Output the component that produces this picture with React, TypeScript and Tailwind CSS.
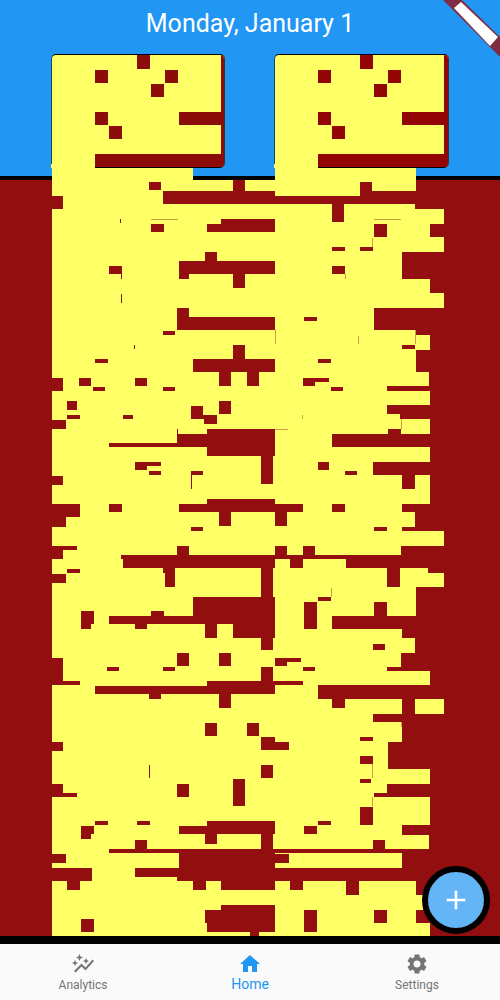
import { MdAdd, MdAutoGraph, MdHome, MdSettings } from "react-icons/md";

type Box = [number, number, number, number];

// yellow rows: top, bottom, right edge (all start at x=52)
const bands: [number, number, number][] = [
  [180, 191, 416], [191, 209, 415], [209, 252, 444], [252, 279, 402], [279, 293, 430],
  [293, 308, 444], [308, 330, 374], [330, 335, 415], [335, 350, 430], [350, 372, 416],
  [372, 386, 429], [386, 391, 387], [391, 405, 430], [405, 414, 387], [414, 419, 400],
  [419, 434, 430], [434, 447, 332], [447, 462, 430], [462, 475, 373], [475, 504, 430],
  [504, 512, 402], [512, 531, 415], [531, 546, 444], [546, 555, 401], [555, 559, 250],
  [559, 568, 346], [568, 573, 428], [573, 587, 444], [587, 616, 416], [616, 629, 332],
  [629, 638, 402], [638, 653, 415], [653, 667, 401], [667, 671, 387], [671, 685, 430],
  [685, 699, 318], [699, 714, 444], [714, 722, 373], [722, 727, 401], [727, 742, 402],
  [742, 769, 388], [769, 784, 430], [784, 793, 387], [793, 797, 374], [797, 825, 430],
  [825, 835, 402], [835, 849, 429], [849, 853, 332], [853, 868, 402], [868, 881, 177],
  [881, 895, 416], [895, 910, 423], [910, 923, 416], [923, 936, 430],
];

const holes: Box[] = [
  [149, 182, 161, 190], [233, 180, 245, 191], [360, 182, 372, 204], [163, 191, 275, 204],
  [275, 196, 360, 204], [372, 191, 415, 204], [52, 196, 63, 209], [332, 204, 344, 222],
  [207, 224, 275, 232], [221, 219, 275, 224], [151, 224, 164, 232], [374, 224, 387, 237],
  [430, 224, 444, 237], [332, 247, 345, 251], [360, 247, 373, 251], [205, 252, 217, 261],
  [179, 261, 275, 274], [179, 274, 189, 279], [233, 274, 245, 288], [109, 266, 122, 274],
  [332, 266, 345, 274], [177, 308, 189, 317], [177, 317, 275, 330], [163, 331, 175, 335],
  [304, 317, 317, 321], [402, 345, 415, 349], [233, 345, 245, 359], [95, 359, 108, 363],
  [193, 359, 275, 372], [318, 359, 331, 363], [219, 372, 231, 386], [247, 372, 259, 386],
  [52, 378, 63, 391], [79, 378, 91, 386], [135, 378, 147, 386], [303, 378, 329, 382],
  [303, 382, 315, 386], [93, 387, 105, 391], [163, 387, 175, 391], [331, 387, 343, 391],
  [67, 401, 77, 410], [219, 401, 231, 414], [191, 406, 203, 419], [191, 415, 217, 419],
  [204, 419, 217, 424], [67, 415, 80, 419], [123, 415, 133, 419], [52, 420, 66, 429],
  [207, 429, 275, 456], [177, 434, 207, 447], [109, 443, 177, 447], [388, 429, 401, 434],
  [261, 456, 273, 484], [135, 462, 161, 466], [135, 466, 147, 470], [318, 462, 329, 470],
  [149, 471, 161, 475], [191, 471, 203, 475], [345, 471, 357, 475], [52, 476, 63, 485],
  [402, 475, 415, 489], [207, 499, 275, 504], [179, 504, 303, 512], [52, 504, 80, 517],
  [52, 517, 66, 527], [109, 504, 122, 512], [332, 504, 345, 512], [219, 512, 231, 526],
  [275, 512, 287, 526], [191, 527, 203, 531], [374, 527, 387, 531], [402, 527, 415, 531],
  [52, 546, 77, 550], [52, 550, 63, 559], [177, 546, 189, 555], [275, 546, 287, 555],
  [303, 546, 315, 555], [123, 555, 275, 568], [121, 555, 123, 559], [290, 559, 303, 568],
  [163, 568, 175, 573], [165, 573, 175, 587], [67, 569, 80, 573], [52, 574, 66, 583],
  [261, 568, 273, 597], [387, 568, 400, 587], [193, 597, 275, 616], [318, 597, 331, 601],
  [304, 602, 317, 629], [374, 602, 387, 616], [151, 611, 164, 616], [81, 611, 94, 624],
  [81, 624, 91, 629], [109, 616, 275, 624], [250, 624, 275, 638], [135, 624, 147, 629],
  [205, 624, 217, 638], [233, 624, 250, 638], [261, 638, 273, 650], [373, 644, 385, 650],
  [177, 653, 189, 666], [219, 653, 231, 666], [52, 658, 63, 681], [275, 658, 287, 666],
  [287, 658, 301, 662], [107, 667, 119, 671], [163, 667, 175, 671], [303, 667, 315, 671],
  [261, 667, 273, 681], [52, 681, 80, 685], [207, 681, 275, 694], [95, 686, 207, 694],
  [275, 681, 303, 685], [149, 694, 161, 699], [219, 694, 231, 708], [332, 699, 345, 708],
  [402, 699, 415, 714], [205, 723, 217, 736], [247, 723, 259, 736], [360, 737, 373, 741],
  [261, 737, 275, 750], [275, 742, 289, 750], [52, 742, 63, 751], [360, 756, 373, 764],
  [261, 765, 273, 778], [360, 779, 371, 783], [233, 779, 245, 806], [52, 784, 63, 797],
  [63, 793, 77, 797], [177, 784, 189, 797], [360, 807, 373, 825], [95, 821, 108, 825],
  [137, 821, 150, 825], [318, 821, 331, 825], [207, 821, 275, 834], [179, 826, 207, 834],
  [81, 826, 94, 834], [81, 834, 91, 839], [304, 826, 317, 834], [205, 834, 217, 844],
  [261, 834, 273, 849], [135, 840, 147, 850], [373, 840, 385, 849], [109, 849, 332, 853],
  [52, 854, 66, 863], [179, 853, 275, 868], [275, 854, 289, 863], [52, 868, 92, 881],
  [135, 868, 177, 877], [67, 881, 80, 890], [193, 881, 206, 890], [221, 881, 275, 890],
  [290, 881, 303, 890], [346, 881, 359, 895], [221, 905, 275, 910], [205, 910, 275, 923],
  [207, 923, 275, 932], [250, 932, 259, 936], [81, 919, 94, 932], [304, 910, 317, 932],
  [374, 910, 387, 923], [121, 274, 122, 279], [121, 294, 122, 303], [134, 345, 135, 349],
  [177, 429, 178, 434], [191, 475, 192, 489], [149, 765, 150, 778], [120, 219, 121, 223],
];

const seams: Box[] = [
  [151, 219, 178, 220], [374, 219, 401, 220], [372, 238, 373, 247], [345, 274, 346, 279],
  [275, 330, 276, 344], [358, 336, 359, 344], [415, 330, 416, 344], [275, 429, 288, 430],
  [302, 415, 303, 419], [331, 588, 332, 597], [372, 764, 373, 778], [372, 797, 373, 806],
  [401, 419, 402, 429], [401, 722, 402, 727],
];

// red blocks inside a card, relative to the card's inner corner
const cardHoles: Box[] = [
  [85, 0, 98, 14], [43, 15, 56, 28], [113, 15, 126, 28], [99, 29, 112, 42],
  [43, 57, 56, 70], [127, 57, 173, 70], [57, 71, 70, 84], [43, 99, 173, 112], [169, 0, 173, 112],
];

function Card({ red, width }: { red: string; width: string }) {
  return (
    <div
      className={`h-[114px] overflow-hidden rounded-[5px] border border-black border-r-[#40302c] border-l-[#14466e] bg-[#ffff66] ${width}`}
    >
      <svg width="173" height="112" viewBox="0 0 173 112" shapeRendering="crispEdges">
        {cardHoles.map(([x1, y1, x2, y2]) => (
          <rect key={`${x1}-${y1}`} x={x1} y={y1} width={x2 - x1} height={y2 - y1} fill={red} />
        ))}
      </svg>
    </div>
  );
}

function Overflow() {
  return (
    <svg
      className="absolute top-0 left-0"
      width="500"
      height="936"
      viewBox="0 0 500 936"
      shapeRendering="crispEdges"
    >
      <rect x="51" y="164" width="44" height="4" fill="#ffff66" />
      <rect x="274" y="164" width="44" height="4" fill="#ffff66" />
      <rect x="52" y="168" width="141" height="12" fill="#ffff66" />
      <rect x="275" y="168" width="141" height="12" fill="#ffff66" />
      {bands.map(([top, bottom, right]) => (
        <rect key={top} x="52" y={top} width={right - 52} height={bottom - top} fill="#ffff66" />
      ))}
      {holes.map(([x1, y1, x2, y2]) => (
        <rect key={`${x1}-${y1}`} x={x1} y={y1} width={x2 - x1} height={y2 - y1} fill="#930e0e" />
      ))}
      {seams.map(([x1, y1, x2, y2]) => (
        <rect key={`${x1}-${y1}`} x={x1} y={y1} width={x2 - x1} height={y2 - y1} fill="#cf9b45" />
      ))}
    </svg>
  );
}

function Banner() {
  return (
    <svg className="absolute top-0 right-0" width="57" height="58" viewBox="443 0 57 58">
      <polygon points="443,0 462,0 500,37 500,57" fill="#7f2d45" />
      <polygon points="454,8 461,2 498,37 490,46" fill="#ffffff" />
    </svg>
  );
}

function NavItem({ label, active, icon }: { label: string; active?: boolean; icon: React.ReactNode }) {
  return (
    <div className={`flex w-[166px] flex-col items-center ${active ? "text-[#2196f3]" : "text-[#757575]"}`}>
      {icon}
      <span className={active ? "text-[14px] leading-[16px]" : "text-[12px] leading-[18px]"}>{label}</span>
    </div>
  );
}

export default function App() {
  return (
    <div className="relative flex h-[1000px] w-[500px] flex-col overflow-hidden bg-[#930e0e] font-['Roboto',sans-serif]">
      <header className="h-[180px] border-b-4 border-black bg-[#2196f3]">
        <h1 className="pt-[8px] text-center text-[25px] leading-[32px] font-normal text-white">Monday, January 1</h1>
        <div className="mt-[14px] flex gap-[49px] pl-[51px]">
          <Card red="#8c0c0a" width="w-[174px]" />
          <Card red="#930404" width="w-[175px]" />
        </div>
      </header>
      <main className="flex-1" />
      <nav className="flex h-[64px] items-start justify-between border-t-8 border-black bg-[#fafafa] px-0 pt-[8px]">
        <NavItem label="Analytics" icon={<MdAutoGraph size={24} />} />
        <NavItem label="Home" active icon={<MdHome size={24} />} />
        <NavItem label="Settings" icon={<MdSettings size={24} />} />
      </nav>
      <Overflow />
      <Banner />
      <button className="absolute right-[10px] bottom-[66px] flex h-[68px] w-[68px] items-center justify-center rounded-full border-[6px] border-black bg-[#64b5f6] text-white">
        <MdAdd size={32} />
      </button>
    </div>
  );
}
